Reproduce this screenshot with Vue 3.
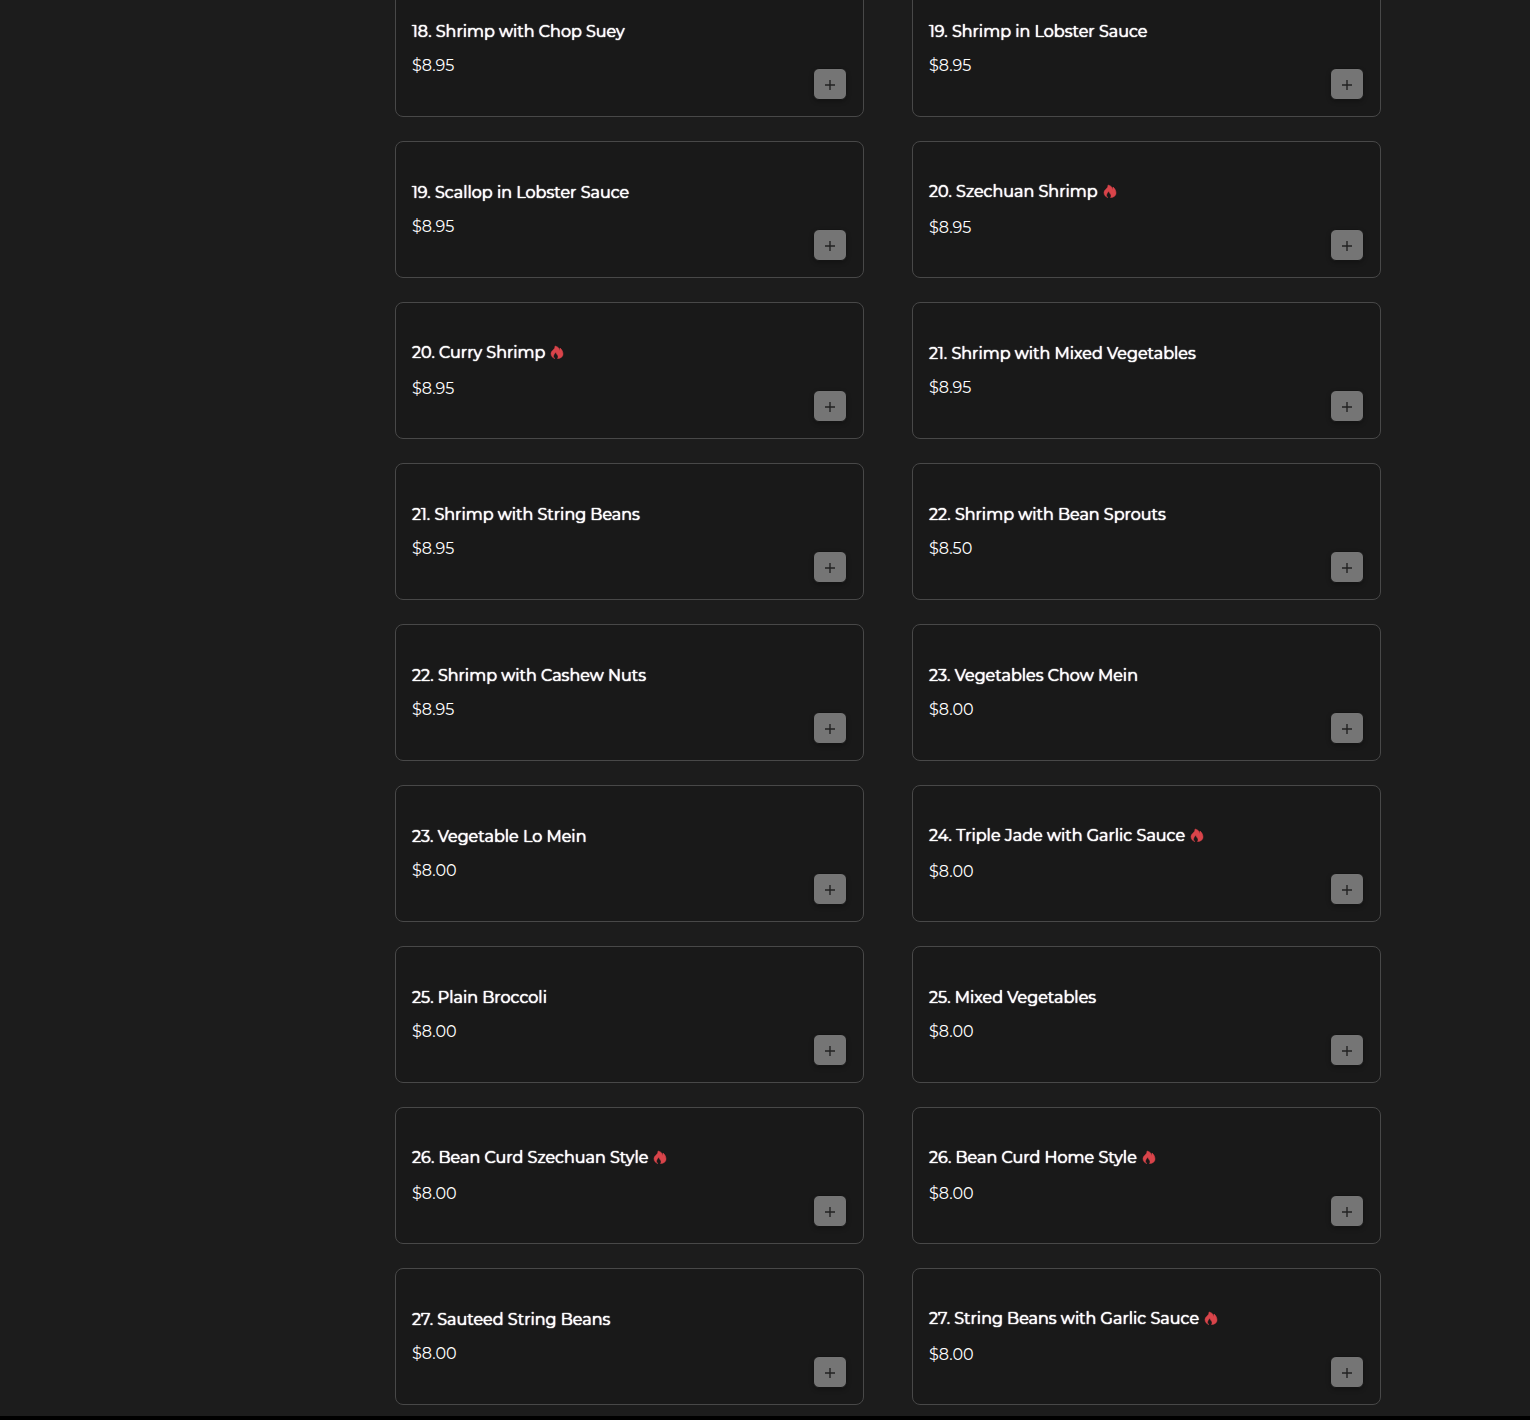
<script setup>
const dishes = [
  { name: '18. Shrimp with Chop Suey', price: '$8.95' },
  { name: '19. Shrimp in Lobster Sauce', price: '$8.95' },
  { name: '19. Scallop in Lobster Sauce', price: '$8.95' },
  { name: '20. Szechuan Shrimp', price: '$8.95', spicy: true },
  { name: '20. Curry Shrimp', price: '$8.95', spicy: true },
  { name: '21. Shrimp with Mixed Vegetables', price: '$8.95' },
  { name: '21. Shrimp with String Beans', price: '$8.95' },
  { name: '22. Shrimp with Bean Sprouts', price: '$8.50' },
  { name: '22. Shrimp with Cashew Nuts', price: '$8.95' },
  { name: '23. Vegetables Chow Mein', price: '$8.00' },
  { name: '23. Vegetable Lo Mein', price: '$8.00' },
  { name: '24. Triple Jade with Garlic Sauce', price: '$8.00', spicy: true },
  { name: '25. Plain Broccoli', price: '$8.00' },
  { name: '25. Mixed Vegetables', price: '$8.00' },
  { name: '26. Bean Curd Szechuan Style', price: '$8.00', spicy: true },
  { name: '26. Bean Curd Home Style', price: '$8.00', spicy: true },
  { name: '27. Sauteed String Beans', price: '$8.00' },
  { name: '27. String Beans with Garlic Sauce', price: '$8.00', spicy: true }
]
</script>

<template>
  <div class="page">
    <main class="menu">
      <ul class="dishes">
        <li v-for="dish in dishes" :key="dish.name" class="dish">
          <div class="info">
            <h3 class="name" :class="{ spicy: dish.spicy }">
              {{ dish.name }}
              <svg v-if="dish.spicy" class="flame" viewBox="0 0 24 28" role="img" aria-label="Spicy">
                <path d="M8 0C14 1 17 5 17 9C18 8 18 6 18 4C22 7 24 12 24 16C24 21 20 25 13 25C15 22 14 19 12 17C11 16 10 14 10 12C7 15 5 18 5 21C5 23 6 24 8 25C3 24 0 20 0 15C0 9 9 7 8 0Z" />
              </svg>
            </h3>
            <p class="price">{{ dish.price }}</p>
          </div>
          <button class="add" type="button" :aria-label="'Add ' + dish.name">
            <svg class="plus" viewBox="0 0 10 12" aria-hidden="true">
              <path d="M5 2V12M0 7H10" />
            </svg>
          </button>
        </li>
      </ul>
    </main>
    <footer class="footer"></footer>
  </div>
</template>

<style>
body {
  margin: 0;
  background: #1c1c1c;
}
</style>

<style scoped>
.page {
  overflow: hidden;
  color: #fff;
  font-family: Montserrat, Inter, sans-serif;
  font-size: 16px;
  line-height: 24px;
}

.menu {
  padding: 0 149px 11px 395px;
}

.dishes {
  display: grid;
  grid-template-columns: 1fr 1fr;
  gap: 24px 48px;
  margin: -20px 0 0;
  padding: 0;
  list-style: none;
}

.dish {
  display: flex;
  align-items: center;
  justify-content: space-between;
  box-sizing: border-box;
  min-height: 137px;
  padding: 16px;
  border: 1px solid #484848;
  border-radius: 8px;
  background: #191919;
}

.name {
  display: flex;
  align-items: center;
  gap: 6px;
  margin: 0 0 10px;
  font-size: 16px;
  font-weight: 400;
  text-shadow: 0 0 1px #fff, 0 0 1px #fff;
}

.spicy {
  margin-bottom: 12px;
}

.flame {
  width: 12px;
  height: 14px;
  fill: #d9444a;
  stroke: #d9444a;
  stroke-width: 1;
  overflow: visible;
}

.price {
  margin: 0;
}

.add {
  display: flex;
  align-items: center;
  justify-content: center;
  align-self: flex-end;
  width: 34px;
  height: 32px;
  padding: 0;
  border: 1px solid #141414;
  border-radius: 6px;
  background: #757575;
  box-shadow: 0 2px 4px rgba(0, 0, 0, 0.25);
  cursor: pointer;
}

.plus {
  width: 10px;
  height: 12px;
  fill: none;
  stroke: #222;
  stroke-width: 1.4;
}

.footer {
  height: 4px;
  background: #000;
}
</style>
